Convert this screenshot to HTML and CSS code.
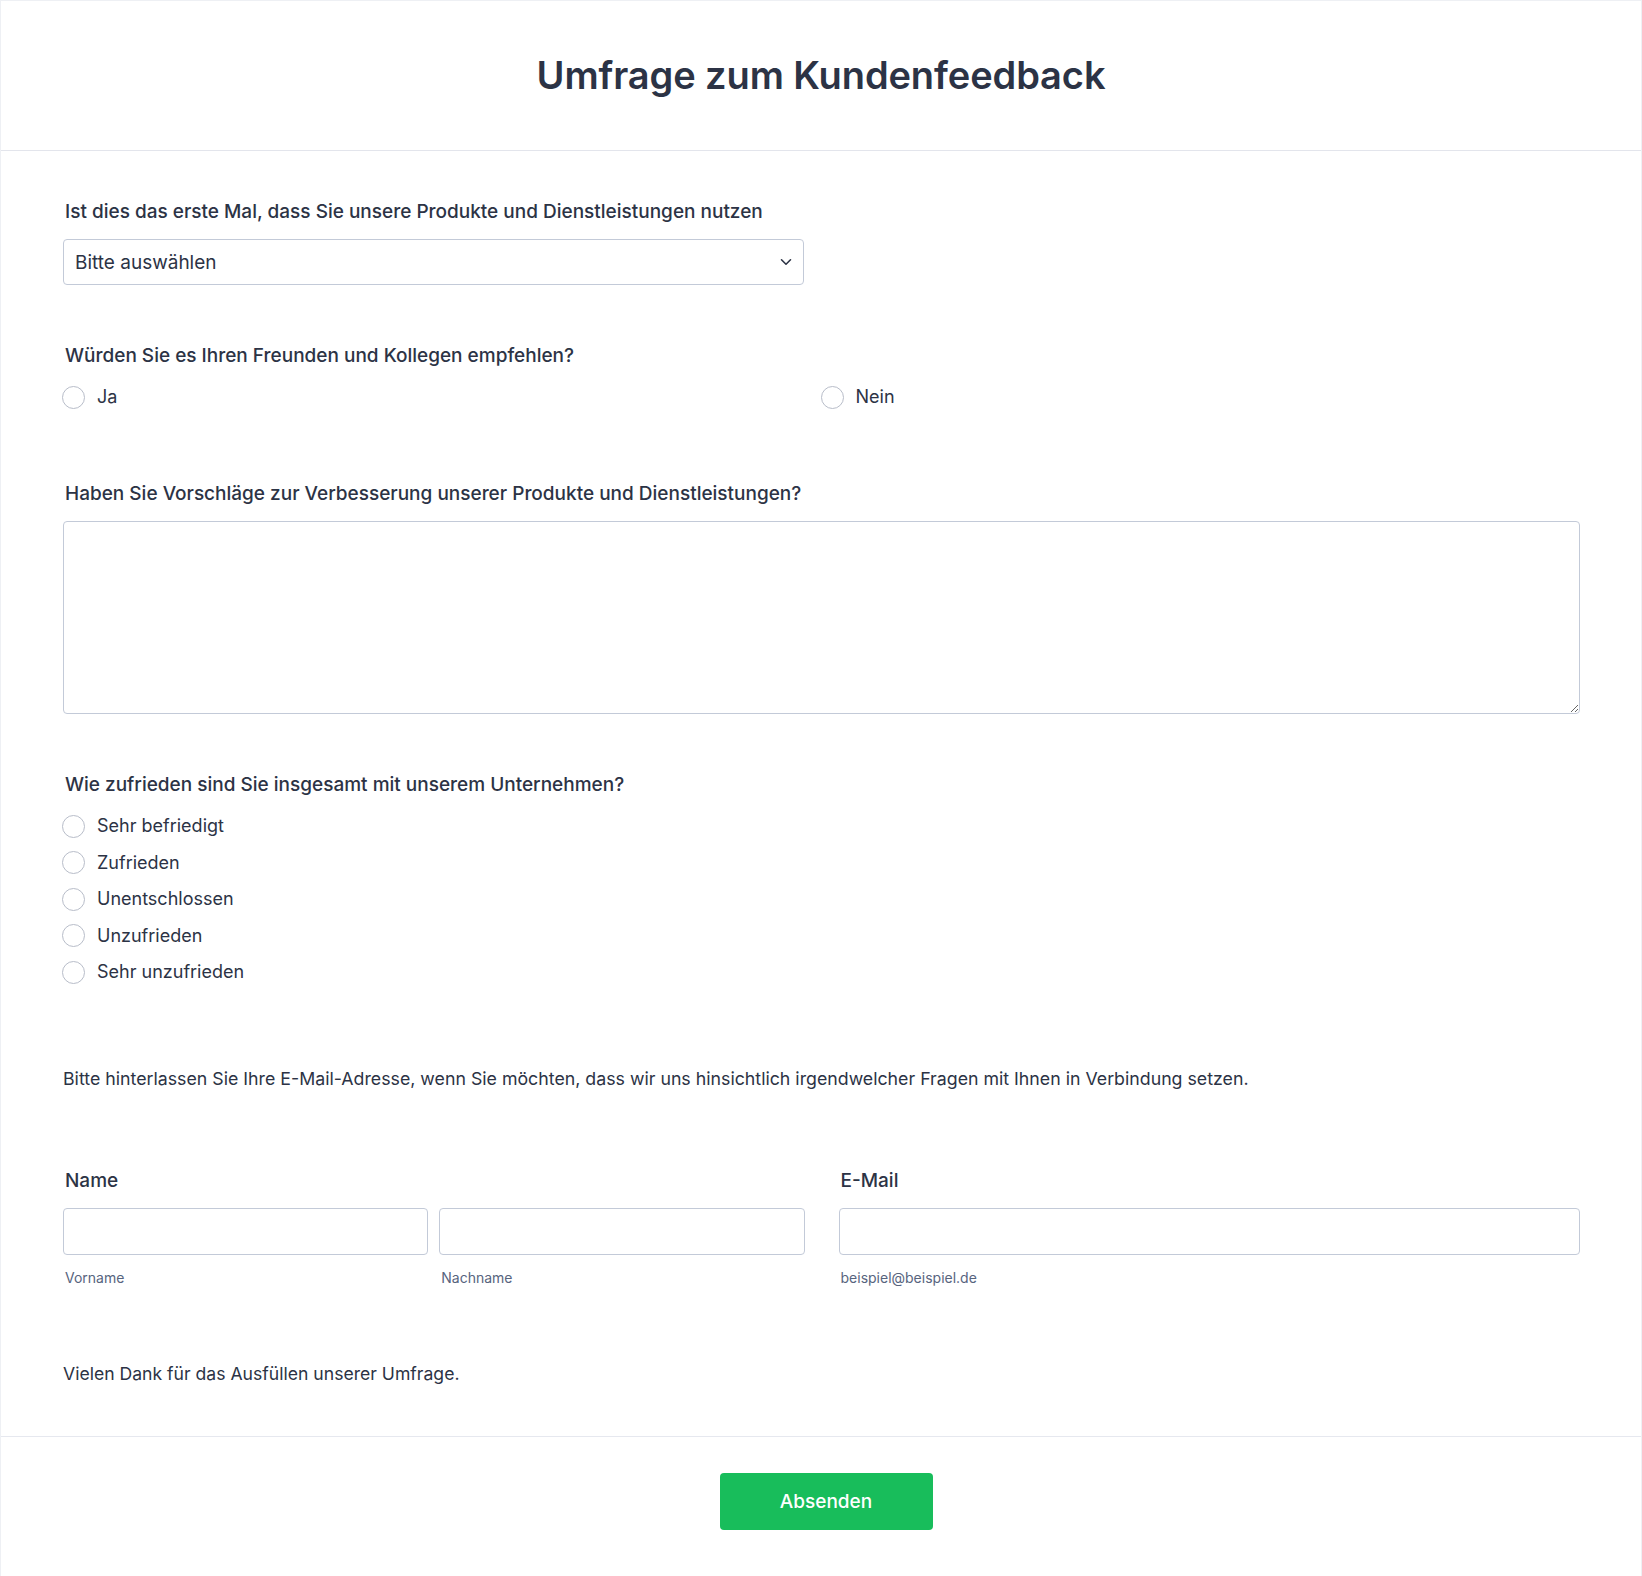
FILE: index.html
```html
<!DOCTYPE html>
<html lang="de">
<head>
    <meta charset="UTF-8">
    <meta name="viewport" content="width=device-width, initial-scale=1.0">
    <title>Umfrage zum Kundenfeedback</title>
    <link rel="stylesheet" href="styles.css">
</head>
<body>

<form class="formular" onsubmit="return false;">

    <div class="kopf">
        <h1>Umfrage zum Kundenfeedback</h1>
    </div>

    <div class="inhalt">

        <div class="feld feld-erstes">
            <label class="frage" for="ersteMal">Ist dies das erste Mal, dass Sie unsere Produkte und Dienstleistungen nutzen</label>
            <div class="auswahl-box">
                <select id="ersteMal" class="auswahl">
                    <option value="">Bitte auswählen</option>
                    <option value="Ja">Ja</option>
                    <option value="Nein">Nein</option>
                </select>
                <svg class="pfeil" width="12" height="8" viewBox="0 0 12 8">
                    <path d="M1.5 1.8 L6 6.2 L10.5 1.8" fill="none" stroke="#2c3345" stroke-width="1.6" stroke-linecap="round" stroke-linejoin="round"/>
                </svg>
            </div>
        </div>

        <div class="feld">
            <div class="frage">Würden Sie es Ihren Freunden und Kollegen empfehlen?</div>
            <div class="optionen zwei-spalten">
                <label class="option"><input type="radio" name="empfehlen" value="Ja"> Ja</label>
                <label class="option"><input type="radio" name="empfehlen" value="Nein"> Nein</label>
            </div>
        </div>

        <div class="feld feld-weit">
            <label class="frage" for="vorschlaege">Haben Sie Vorschläge zur Verbesserung unserer Produkte und Dienstleistungen?</label>
            <textarea id="vorschlaege" class="textfeld"></textarea>
        </div>

        <div class="feld">
            <div class="frage">Wie zufrieden sind Sie insgesamt mit unserem Unternehmen?</div>
            <div class="optionen">
                <label class="option"><input type="radio" name="zufrieden" value="1"> Sehr befriedigt</label>
                <label class="option"><input type="radio" name="zufrieden" value="2"> Zufrieden</label>
                <label class="option"><input type="radio" name="zufrieden" value="3"> Unentschlossen</label>
                <label class="option"><input type="radio" name="zufrieden" value="4"> Unzufrieden</label>
                <label class="option"><input type="radio" name="zufrieden" value="5"> Sehr unzufrieden</label>
            </div>
        </div>

        <p class="hinweis">Bitte hinterlassen Sie Ihre E-Mail-Adresse, wenn Sie möchten, dass wir uns hinsichtlich irgendwelcher Fragen mit Ihnen in Verbindung setzen.</p>

        <div class="kontakt">
            <div class="kontakt-spalte">
                <div class="frage">Name</div>
                <div class="name-felder">
                    <div>
                        <input type="text" class="eingabe" id="vorname">
                        <label class="unterlabel" for="vorname">Vorname</label>
                    </div>
                    <div>
                        <input type="text" class="eingabe" id="nachname">
                        <label class="unterlabel" for="nachname">Nachname</label>
                    </div>
                </div>
            </div>
            <div class="kontakt-spalte">
                <label class="frage" for="email">E-Mail</label>
                <input type="email" class="eingabe" id="email">
                <label class="unterlabel" for="email">beispiel@beispiel.de</label>
            </div>
        </div>

        <p class="danke">Vielen Dank für das Ausfüllen unserer Umfrage.</p>

    </div>

    <div class="fuss">
        <button type="submit" class="absenden">Absenden</button>
    </div>

</form>

</body>
</html>
```

FILE: styles.css
```css
* {
    box-sizing: border-box;
}

body {
    margin: 0;
    font-family: 'Inter', 'Noto Sans', sans-serif;
    color: #2c3345;
    background-color: #ffffff;
}

.formular {
    border: 1px solid #eef0f4;
    border-bottom: none;
    min-height: 1576px;
}

.kopf {
    height: 150px;
    border-bottom: 1px solid #e3e5ec;
    display: flex;
    align-items: center;
    justify-content: center;
    padding-bottom: 2px;
}

.kopf h1 {
    margin: 0;
    font-size: 38px;
    font-weight: 600;
    letter-spacing: -0.1px;
    color: #2c3345;
}

.inhalt {
    padding: 49px 61px 50px 62px;
}

.feld {
    margin-top: 59px;
}

.feld-erstes {
    margin-top: 0;
}

.feld-weit {
    margin-top: 73px;
}

.frage {
    display: block;
    font-size: 19px;
    font-weight: 500;
    line-height: 24px;
    padding-left: 2px;
    margin-bottom: 15px;
}

.auswahl-box {
    position: relative;
    width: 741px;
}

.auswahl {
    appearance: none;
    -webkit-appearance: none;
    width: 100%;
    height: 46px;
    padding: 0 40px 0 11px;
    border: 1px solid #c3cad8;
    border-radius: 4px;
    background: #ffffff;
    font-family: inherit;
    font-size: 19px;
    color: #2c3345;
}

.pfeil {
    position: absolute;
    right: 12px;
    top: 19px;
    pointer-events: none;
}

.optionen {
    display: flex;
    flex-direction: column;
    gap: 12.6px;
    padding-top: 2px;
}

.zwei-spalten {
    display: grid;
    grid-template-columns: 1fr 1fr;
    column-gap: 0;
}

.option {
    display: flex;
    align-items: center;
    height: 24px;
    font-size: 18px;
    line-height: 24px;
    cursor: pointer;
}

.option input {
    appearance: none;
    -webkit-appearance: none;
    width: 23px;
    height: 23px;
    margin: 0 12px 0 -1px;
    border: 1px solid #b8bdc9;
    border-radius: 50%;
    background: #ffffff;
    cursor: pointer;
}

.option input:checked {
    border: 6px solid #2e69ff;
}

.textfeld {
    display: block;
    width: 100%;
    height: 193px;
    border: 1px solid #c3cad8;
    border-radius: 4px;
    padding: 10px 12px;
    font-family: inherit;
    font-size: 18px;
    color: #2c3345;
}

.hinweis {
    margin: 83px 0 0 0;
    font-size: 17.75px;
    line-height: 24px;
}

.kontakt {
    display: grid;
    grid-template-columns: 1fr 1fr;
    gap: 34px;
    margin-top: 78px;
}

.name-felder {
    display: grid;
    grid-template-columns: 1fr 1fr;
    gap: 11px;
}

.eingabe {
    display: block;
    width: 100%;
    height: 47px;
    border: 1px solid #c3cad8;
    border-radius: 4px;
    padding: 0 12px;
    font-family: inherit;
    font-size: 18px;
    color: #2c3345;
}

.unterlabel {
    display: block;
    margin-top: 14px;
    padding-left: 2px;
    font-size: 14px;
    line-height: 18px;
    color: #57647e;
}

.danke {
    margin: 75px 0 0 0;
    font-size: 17.6px;
    line-height: 24px;
}

.fuss {
    border-top: 1px solid #e6e8ef;
    padding: 36px 0 47px 0;
    display: flex;
    justify-content: center;
}

.absenden {
    width: 213px;
    height: 57px;
    margin-left: 10px;
    border: none;
    border-radius: 4px;
    background-color: #18bd5b;
    color: #ffffff;
    font-family: inherit;
    font-size: 19px;
    font-weight: 500;
    cursor: pointer;
}

.absenden:hover {
    background-color: #16a951;
}
```
